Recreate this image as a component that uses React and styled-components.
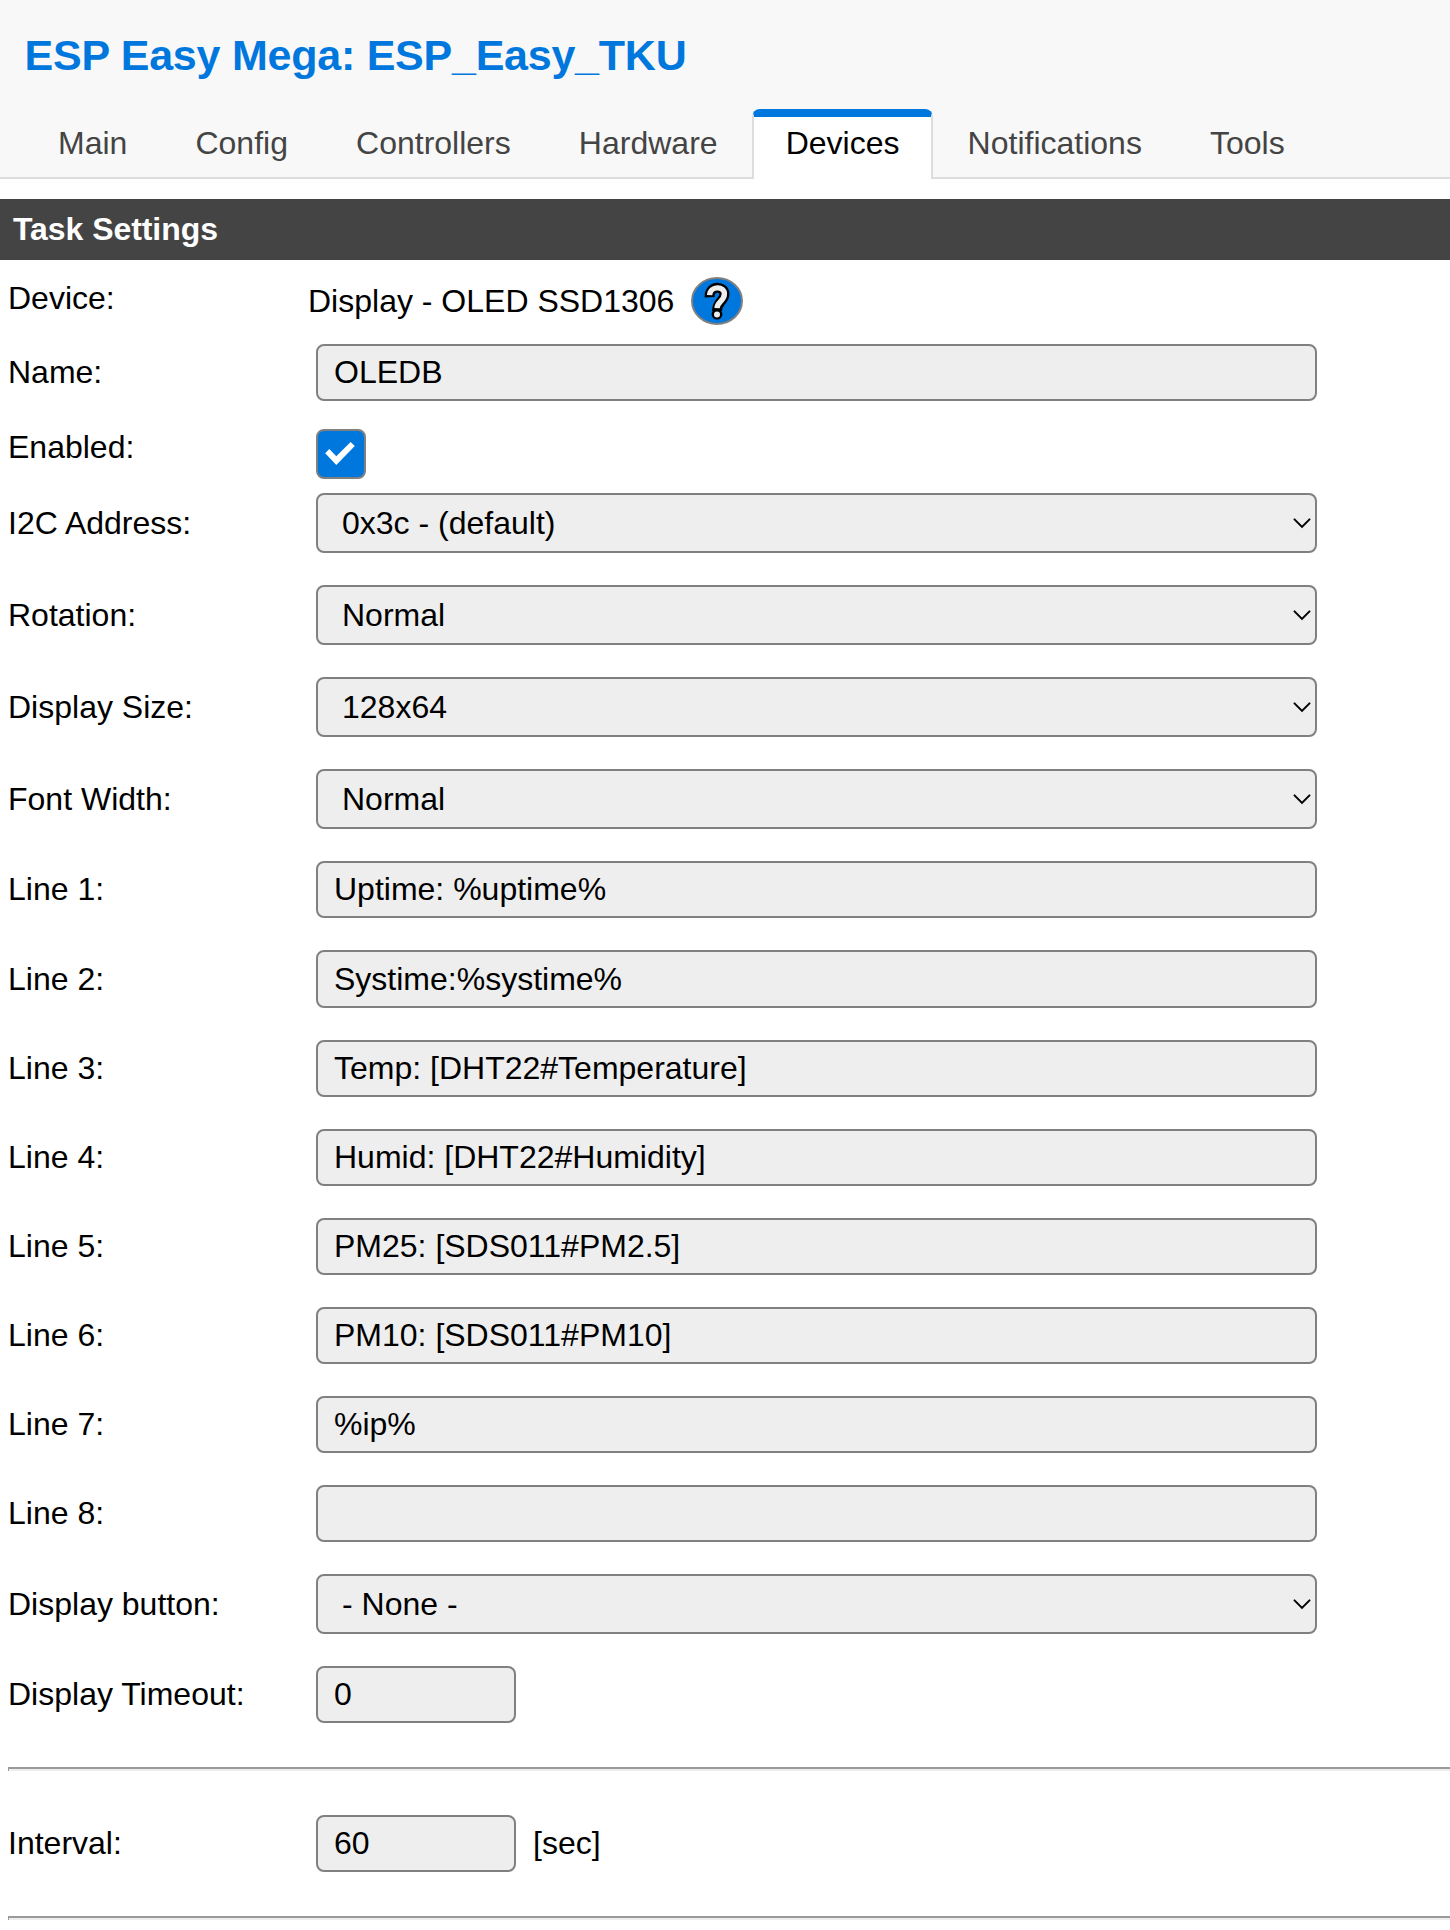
import React from 'react';
import styled, { createGlobalStyle } from 'styled-components';

const GlobalStyle = createGlobalStyle`
  *, *::before, *::after { box-sizing: border-box; }
  body {
    margin: 0;
    background: #fff;
    color: #000;
    font: 32px/37px "Liberation Sans", Arial, sans-serif;
    overflow: hidden;
  }
`;

const Page = styled.div`
  height: 1930px;
  overflow: hidden;
`;

const Header = styled.header`
  display: flex;
  flex-direction: column;
  justify-content: space-between;
  height: 179px;
  background: #f8f8f8;
  box-shadow: inset 0 -2px #ddd;
`;

const Title = styled.h1`
  margin: 30px 0 0 24.5px;
  color: #0077dd;
  font-size: 43px;
  line-height: 51px;
  letter-spacing: -0.24px;
  white-space: nowrap;
`;

const Tabs = styled.nav`
  display: flex;
  height: 70px;
  padding-left: 24px;
  gap: 0.1px;
`;

const Tab = styled.a`
  padding: 8px 32px 0;
  border: 2px solid ${(p) => (p.$active ? '#ddd' : 'transparent')};
  border-top: 8px solid ${(p) => (p.$active ? '#07d' : 'transparent')};
  border-bottom: 0;
  border-radius: 8px 8px 0 0;
  background: ${(p) => (p.$active ? '#fff' : 'transparent')};
  color: ${(p) => (p.$active ? '#000' : '#444')};
`;

const SectionTitle = styled.h2`
  height: 61px;
  margin: 20px 0 0;
  padding: 12px 13px 0;
  background: #444;
  color: #fff;
  font-size: 32px;
  line-height: 37px;
  letter-spacing: -0.06px;
`;

const Row = styled.div`
  display: grid;
  grid-template-columns: 300px 1fr;
  align-items: start;
  height: ${(p) => p.$height}px;
  padding-left: 8px;
`;

const Label = styled.label`
  padding-top: ${(p) => p.$top}px;
`;

const Cell = styled.div`
  display: flex;
  align-items: center;
  gap: 17px;
  padding: ${(p) => p.$top}px 0 0 ${(p) => (p.$flush ? 0 : 8)}px;
`;

const TextInput = styled.input`
  width: ${(p) => (p.$short ? 200 : 1001)}px;
  height: ${(p) => p.$height}px;
  padding: 0 16px;
  border: 2px solid #808080;
  border-radius: 8px;
  background: #eee;
  color: #000;
  font: inherit;
`;

const SelectBox = styled.div`
  display: grid;
  width: 1001px;
  height: 60px;
  align-items: center;

  & > * { grid-area: 1 / 1; }
`;

const Select = styled.select`
  appearance: none;
  width: 100%;
  height: 60px;
  padding: 0 40px 0 24px;
  border: 2px solid #808080;
  border-radius: 8px;
  background: #eee;
  color: #000;
  font: inherit;
`;

const Chevron = styled.svg`
  justify-self: end;
  margin-right: 5px;
  pointer-events: none;
`;

const Checkbox = styled.span`
  display: grid;
  width: 50px;
  height: 50px;
  border: 2px solid #808080;
  border-radius: 8px;
  background: #07d;
`;

const Rule = styled.hr`
  height: 4px;
  margin: 28px 0 28px 8px;
  border: 0;
  border-top: 2px solid #9a9a9a;
  border-left: 1px solid #9a9a9a;
  background: #eee;
`;

const HelpIcon = () => (
  <svg width="52" height="48" viewBox="0 0 52 48">
    <ellipse cx="26" cy="24" rx="25" ry="23" fill="#07d" stroke="#808080" strokeWidth="2" />
    <g fill="none">
      <path d="M18.6 20.2C18 7.8 33.8 8.6 33.4 17.2C33.2 24.2 26.2 24.4 26 34" stroke="#000" strokeWidth="10" />
      <circle cx="26" cy="37.2" r="5.4" fill="#000" />
      <path d="M18.6 18.2C19 8.6 33.8 8.6 33.4 17.2C33.2 24.2 26.2 24.4 26 31.2" stroke="#eee" strokeWidth="5.4" />
      <circle cx="26" cy="37.5" r="3" fill="#eee" />
    </g>
  </svg>
);

const CheckMark = () => (
  <svg width="46" height="46" viewBox="0 0 46 46">
    <path d="M7.2 22.2L11.3 18L18.3 25.3L32.6 11L36.8 14.9L18.3 34Z" fill="#fff" />
  </svg>
);

const SelectField = ({ label, value }) => (
  <Row $height={92}>
    <Label $top={28}>{label}</Label>
    <Cell $top={16}>
      <SelectBox>
        <Select defaultValue={value}>
          <option>{value}</option>
        </Select>
        <Chevron width="19" height="12" viewBox="0 0 19 12">
          <path d="M1.5 2.4L9 9.9L16.5 2.4" fill="none" stroke="#000" strokeWidth="2" strokeLinecap="round" />
        </Chevron>
      </SelectBox>
    </Cell>
  </Row>
);

const TextField = ({ label, value, unit, short, height = 57 }) => (
  <Row $height={height + 32}>
    <Label $top={height - 31}>{label}</Label>
    <Cell $top={16}>
      <TextInput $height={height} $short={short} defaultValue={value} />
      {unit}
    </Cell>
  </Row>
);

const tabs = ['Main', 'Config', 'Controllers', 'Hardware', 'Devices', 'Notifications', 'Tools'];

const lines = [
  'Uptime: %uptime%',
  'Systime:%systime%',
  'Temp: [DHT22#Temperature]',
  'Humid: [DHT22#Humidity]',
  'PM25: [SDS011#PM2.5]',
  'PM10: [SDS011#PM10]',
  '%ip%',
  '',
];

export default function App() {
  return (
    <Page>
      <GlobalStyle />
      <Header>
        <Title>ESP Easy Mega: ESP_Easy_TKU</Title>
        <Tabs>
          {tabs.map((name) => (
            <Tab key={name} $active={name === 'Devices'}>{name}</Tab>
          ))}
        </Tabs>
      </Header>
      <SectionTitle>Task Settings</SectionTitle>
      <Row $height={68}>
        <Label $top={20}>Device:</Label>
        <Cell $top={17} $flush>
          Display - OLED SSD1306
          <HelpIcon />
        </Cell>
      </Row>
      <TextField label="Name:" value="OLEDB" />
      <Row $height={60}>
        <Label $top={12}>Enabled:</Label>
        <Cell $top={12}>
          <Checkbox role="checkbox" aria-checked="true">
            <CheckMark />
          </Checkbox>
        </Cell>
      </Row>
      <SelectField label="I2C Address:" value="0x3c - (default)" />
      <SelectField label="Rotation:" value="Normal" />
      <SelectField label="Display Size:" value="128x64" />
      <SelectField label="Font Width:" value="Normal" />
      {lines.map((text, i) => (
        <TextField key={i} label={`Line ${i + 1}:`} value={text} height={i === 1 ? 58 : 57} />
      ))}
      <SelectField label="Display button:" value="- None -" />
      <TextField label="Display Timeout:" value="0" short />
      <Rule />
      <TextField label="Interval:" value="60" unit="[sec]" short />
      <Rule />
    </Page>
  );
}
